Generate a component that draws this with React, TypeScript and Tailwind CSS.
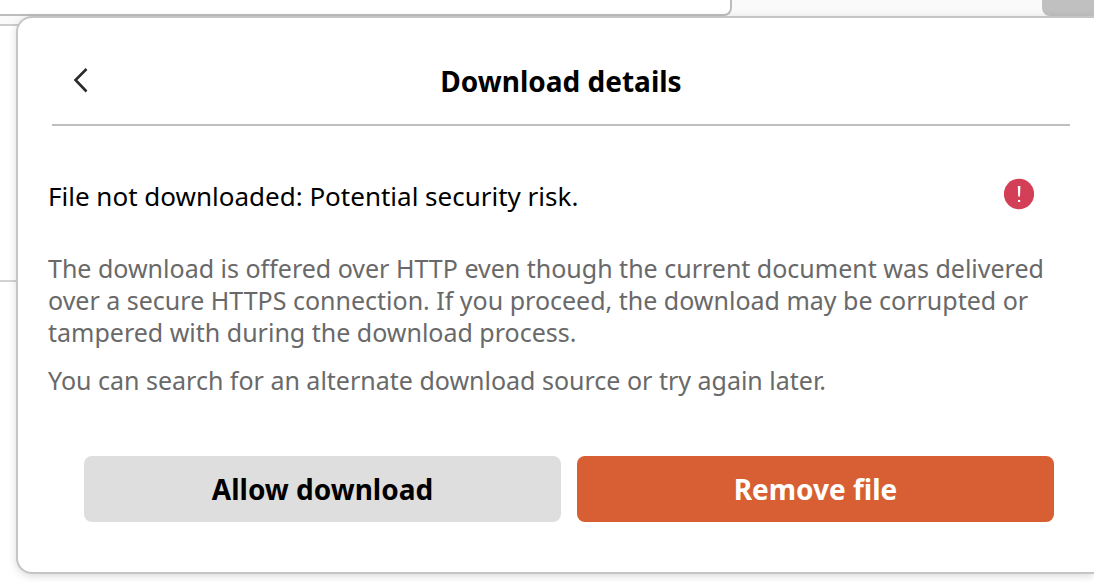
import { ReactNode } from 'react';

function BackIcon() {
  return (
    <svg width="18" height="28" viewBox="0 0 18 28" fill="none" aria-hidden="true">
      <path d="M15.5 2 4.5 13l11 11.5" stroke="#2b2a2d" strokeWidth="2.6" />
    </svg>
  );
}

function AlertIcon() {
  return (
    <svg width="30" height="32" viewBox="0 0 30 32" className="shrink-0" role="img" aria-label="Warning">
      <circle cx="15" cy="16" r="15.2" fill="#d23f57" />
      <path d="M13.8 8h2.6l-.4 10.5h-1.8z" fill="#fff" />
      <rect x="14" y="22" width="2.2" height="2" fill="#fff" />
    </svg>
  );
}

function ActionButton({ className, children }: { className: string; children: ReactNode }) {
  return (
    <button type="button" className={`h-[66px] flex-1 rounded-lg text-[28px] font-bold leading-8 ${className}`}>
      {children}
    </button>
  );
}

export default function App() {
  return (
    <div className="relative min-h-screen overflow-hidden bg-white font-['Noto_Sans','Open_Sans',sans-serif] text-black">
      {/* Browser toolbar behind the panel */}
      <div className="flex h-[26px] items-start border-b-2 border-[#cccccc] bg-[#fafafa]">
        <div className="h-4 basis-[732px] rounded-br-lg border-b-2 border-r-2 border-[#bdbdbd] bg-white" />
        <div className="ml-auto h-4 w-[52px] rounded-bl-lg bg-[#c0c0c0]" />
      </div>
      <div className="h-[256px] border-b-2 border-[#d3d3d3]" />

      {/* Download panel */}
      <section className="absolute left-4 right-0 top-4 rounded-l-2xl border-2 border-r-0 border-[#c5c5c5] bg-white pb-[50px] shadow-[0_2px_8px_rgba(0,0,0,0.15)]">
        <header className="ml-[34px] mr-6 grid h-[108px] grid-cols-[56px_1fr_56px] items-center border-b-2 border-[#bfbfbf] pt-5">
          <button type="button" aria-label="Back" className="flex h-10 items-center justify-center">
            <BackIcon />
          </button>
          <h1 className="text-center text-[28px] font-bold leading-8">Download details</h1>
        </header>

        <div className="pl-[30px] pr-6 pt-[52px] text-[25px] leading-8">
          <div className="flex items-start justify-between pr-9">
            <h2 className="pt-0.5 text-[26px] leading-8">File not downloaded: Potential security risk.</h2>
            <AlertIcon />
          </div>
          <p className="pt-10 text-[#696969]">
            The download is offered over HTTP even though the current document was delivered over a secure HTTPS
            connection. If you proceed, the download may be corrupted or tampered with during the download process.
          </p>
          <p className="pt-4 text-[#696969]">You can search for an alternate download source or try again later.</p>
        </div>

        <div className="ml-[66px] mr-10 mt-[60px] flex gap-4">
          <ActionButton className="bg-[#dedede] text-black">Allow download</ActionButton>
          <ActionButton className="bg-[#d75f33] text-white">Remove file</ActionButton>
        </div>
      </section>
    </div>
  );
}
